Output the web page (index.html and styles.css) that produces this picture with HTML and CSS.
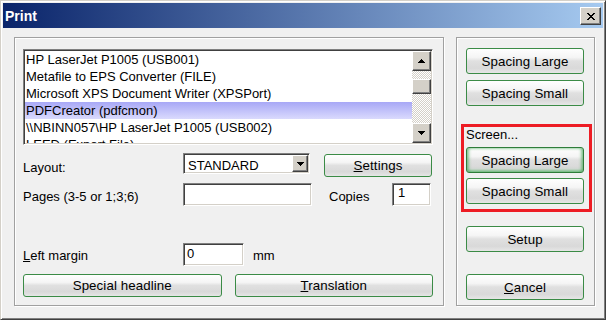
FILE: index.html
```html
<!DOCTYPE html>
<html>
<head>
<meta charset="utf-8">
<title>Print</title>
<link rel="stylesheet" href="styles.css">
</head>
<body>
<div class="window">
  <div class="titlebar">
    <span class="title">Print</span>
    <span class="close"><svg width="8" height="7" viewBox="0 0 8 7"><path d="M0 0h2v1h-2z M6 0h2v1h-2z M1 1h2v1h-2z M5 1h2v1h-2z M2 2h4v1h-4z M3 3h2v1h-2z M2 4h4v1h-4z M1 5h2v1h-2z M5 5h2v1h-2z M0 6h2v1h-2z M6 6h2v1h-2z" fill="#000"/></svg></span>
  </div>
  <div class="body">
    <div class="group left">
      <div class="listbox">
        <ul class="items">
          <li>HP LaserJet P1005 (USB001)</li>
          <li>Metafile to EPS Converter (FILE)</li>
          <li>Microsoft XPS Document Writer (XPSPort)</li>
          <li class="sel">PDFCreator (pdfcmon)</li>
          <li>\\NBINN057\HP LaserJet P1005 (USB002)</li>
          <li>LEED (Export File)</li>
        </ul>
        <div class="vscroll">
          <span class="sbtn"><svg width="7" height="4" viewBox="0 0 7 4"><path d="M3 0h1v1h1v1h1v1h1v1H0V3h1V2h1V1h1z" fill="#000"/></svg></span>
          <span class="track"><span class="thumb"></span></span>
          <span class="sbtn"><svg width="7" height="4" viewBox="0 0 7 4"><path d="M0 0h7v1H6v1H5v1H4v1H3V3H2V2H1V1H0z" fill="#000"/></svg></span>
        </div>
      </div>

      <div class="row row1">
        <span class="lbl lbl1">Layout:</span>
        <div class="combo">
          <span class="combo-val">STANDARD</span>
          <span class="combo-btn"><svg width="7" height="4" viewBox="0 0 7 4"><path d="M0 0h7v1H6v1H5v1H4v1H3V3H2V2H1V1H0z" fill="#000"/></svg></span>
        </div>
        <span class="btn btn-settings"><span><u>S</u>ettings</span></span>
      </div>

      <div class="row row2">
        <span class="lbl lbl2">Pages (3-5 or 1;3;6)</span>
        <span class="field field-pages"></span>
        <span class="copies-lbl">Copies</span>
        <span class="field field-copies">1</span>
      </div>

      <div class="row row3">
        <span class="lbl lbl3"><u>L</u>eft margin</span>
        <span class="field field-margin">0</span>
        <span class="unit">mm</span>
      </div>

      <div class="row row4">
        <span class="btn">Special headline</span>
        <span class="btn"><span><u>T</u>ranslation</span></span>
      </div>
    </div>

    <div class="group right">
      <span class="btn rbtn">Spacing Large</span>
      <span class="btn rbtn gap6">Spacing Small</span>
      <div class="screenbox">
        <div class="screen-lbl">Screen...</div>
        <span class="btn rbtn hot">Spacing Large</span>
        <span class="btn rbtn gap5">Spacing Small</span>
      </div>
      <span class="btn rbtn setup">Setup</span>
      <span class="btn rbtn cancel"><span><u>C</u>ancel</span></span>
    </div>
  </div>
</div>
</body>
</html>
```

FILE: styles.css
```css
* { box-sizing: border-box; }
html, body { margin: 0; padding: 0; }
body {
  width: 606px;
  height: 320px;
  overflow: hidden;
  font-family: "Liberation Sans", Arial, sans-serif;
  font-size: 13px;
  color: #000;
  background: #f0f0f0;
}
.window {
  width: 606px;
  height: 320px;
  display: flex;
  flex-direction: column;
  border: 1px solid;
  border-color: #d4d0c8 #404040 #404040 #d4d0c8;
  padding: 2px;
  box-shadow: inset 1px 1px #fff, inset -1px -1px #808080;
  background: #f0f0f0;
}
.titlebar {
  height: 25px;
  flex: none;
  display: flex;
  align-items: center;
  justify-content: space-between;
  padding: 0 2px;
  background: linear-gradient(to right, #0a246a, #a6caf0);
}
.title {
  color: #fff;
  font-weight: bold;
  font-size: 14px;
  line-height: 16px;
}
.close {
  width: 21px;
  height: 18px;
  display: flex;
  align-items: center;
  justify-content: center;
  background: #d4d0c8;
  border: 1px solid;
  border-color: #fff #404040 #404040 #fff;
  box-shadow: inset -1px -1px #808080;
}
.close svg { display: block; margin-top: 1px; }

.body {
  flex: 1;
  display: flex;
  gap: 12px;
  padding: 9px 8px 11px 11px;
}
.group {
  border: 1px solid #a0a0a0;
  box-shadow: inset 1px 1px #fff, 1px 1px #fff;
  display: flex;
  flex-direction: column;
}
.group.left {
  width: 430px;
  padding: 11px 10px 0 8px;
}
.group.right {
  width: 139px;
  padding: 10px 9px 0 9px;
}

/* list box */
.listbox {
  height: 96px;
  display: flex;
  border: 1px solid;
  border-color: #808080 #fff #fff #808080;
  box-shadow: inset 1px 1px #404040, inset -1px -1px #d4d0c8;
  padding: 1px;
  background: #fff;
}
.items {
  list-style: none;
  margin: 0;
  padding: 0;
  flex: 1;
  overflow: hidden;
}
.items li {
  height: 17px;
  line-height: 16px;
  padding: 1px 0 0 1px;
  white-space: nowrap;
}
.items li.sel {
  background: linear-gradient(#a8a8f6, #dadafd);
}
.vscroll {
  width: 19px;
  display: flex;
  flex-direction: column;
}
.sbtn, .thumb, .combo-btn {
  display: flex;
  align-items: center;
  justify-content: center;
  background: #d4d0c8;
  border: 1px solid;
  border-color: #fff #404040 #404040 #fff;
  box-shadow: inset -1px -1px #808080;
}
.sbtn { height: 20px; flex: none; }
.track {
  flex: 1;
  background: repeating-conic-gradient(#fff 0 25%, #d4d0c8 0 50%) 0 0 / 2px 2px;
  padding-top: 8px;
}
.thumb { height: 15px; }

/* rows */
.row { display: flex; align-items: flex-start; }
.row1 { margin-top: 8px; height: 24px; }
.row2 { margin-top: 6px; height: 23px; }
.row3 { margin-top: 37px; height: 23px; }
.row4 {
  margin-top: 8px;
  height: 23px;
  display: grid;
  grid-template-columns: 1fr 1fr;
  gap: 13px;
}
.lbl { width: 160px; flex: none; line-height: 15px; }
.lbl1 { margin-top: 7px; }
.lbl2 { margin-top: 6px; }
.lbl3 { margin-top: 5px; }

.combo {
  width: 127px;
  height: 21px;
  display: flex;
  border: 1px solid;
  border-color: #808080 #fff #fff #808080;
  box-shadow: inset 1px 1px #404040, inset -1px -1px #d4d0c8;
  padding: 1px;
  background: #fff;
}
.combo-val { flex: 1; line-height: 15px; padding: 3px 0 0 3px; }
.combo-btn { width: 16px; height: 17px; flex: none; }

.field {
  height: 23px;
  border: 1px solid;
  border-color: #808080 #fff #fff #808080;
  box-shadow: inset 1px 1px #404040, inset -1px -1px #d4d0c8;
  background: #fff;
  line-height: 15px;
  padding: 2px 0 0 3px;
}
.field-pages { width: 129px; }
.copies-lbl { margin: 6px 0 0 17px; line-height: 15px; }
.field-copies { width: 39px; margin-left: auto; margin-right: 2px; padding: 1px 0 0 5px; }
.field-margin { width: 61px; padding-top: 2px; }
.unit { margin: 5px 0 0 9px; line-height: 15px; }

/* buttons */
.btn {
  display: flex;
  align-items: center;
  justify-content: center;
  height: 23px;
  border: 1px solid #3b8b46;
  border-radius: 3px;
  background: linear-gradient(#fefefe 0%, #f5f5f5 35%, #e0e0e0 50%, #d9d9d9 80%, #e6e6e6 100%);
  white-space: nowrap;
  font-size: 13.3px;
  letter-spacing: 0.1px;
}
.btn-settings { width: 108px; margin: 1px 0 0 14px; }
.rbtn { height: 26px; width: 118px; flex: none; }
.gap6 { margin-top: 6px; }
.gap5 { margin-top: 5px; }
.screenbox {
  margin: 18px -7px 0 -5px;
  border: 3px solid #ed1c24;
  padding: 0 4px 5px 2px;
}
.screen-lbl { line-height: 15px; height: 15px; margin-bottom: 5px; }
.hot {
  border-color: #2f7d3a;
  box-shadow: inset 2px 0 3px rgba(70, 170, 90, 0.55), inset -2px 0 3px rgba(70, 170, 90, 0.55), inset 0 -2px 3px rgba(70, 170, 90, 0.5);
}
.setup { margin-top: 14px; }
.cancel { margin-top: 22px; }
```
